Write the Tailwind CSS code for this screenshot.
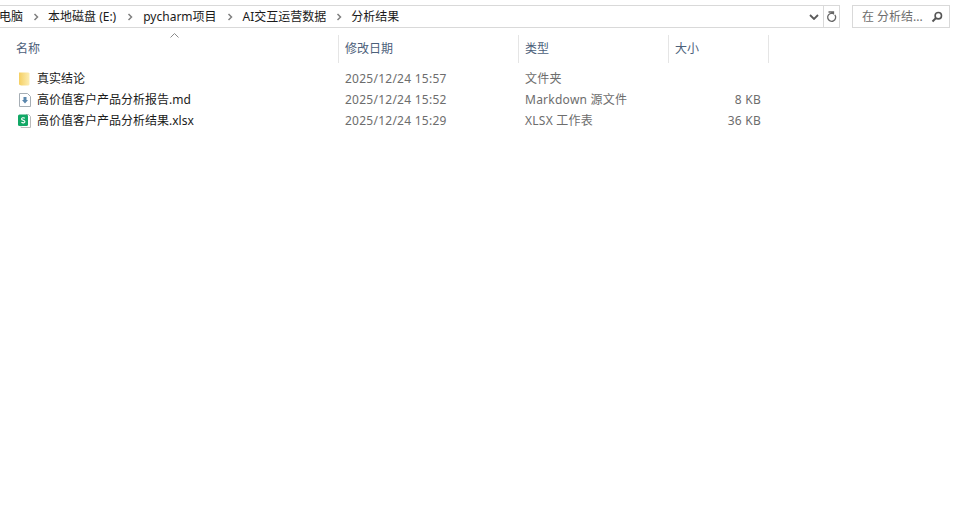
<!DOCTYPE html>
<html lang="zh-CN">
<head>
    <meta charset="UTF-8">
    <title>分析结果</title>
    <script src="https://cdn.jsdelivr.net/npm/@tailwindcss/browser@4"></script>
</head>
<body class="bg-white w-[961px] h-[510px] overflow-hidden font-['Noto_Sans','Noto_Sans_CJK_SC',sans-serif] text-[12px] leading-[16px] text-[#1a1a1a]">
    <!-- address bar -->
    <div class="flex items-start h-[28px] pt-[5px]">
        <div class="flex items-center w-[824px] h-[23px] border-y border-r border-[#d9d9d9] overflow-hidden">
            <span class="ml-[-1px]">电脑</span>
            <svg class="w-[6px] h-[8px] ml-[10px] mr-[9px]" viewBox="0 0 6 8"><path d="M1.5 1l3 3-3 3" fill="none" stroke="#808080" stroke-width="1.5"/></svg>
            <span>本地磁盘 (E:)</span>
            <svg class="w-[6px] h-[8px] ml-[11px] mr-[10px]" viewBox="0 0 6 8"><path d="M1.5 1l3 3-3 3" fill="none" stroke="#808080" stroke-width="1.5"/></svg>
            <span>pycharm项目</span>
            <svg class="w-[6px] h-[8px] ml-[10px] mr-[10px]" viewBox="0 0 6 8"><path d="M1.5 1l3 3-3 3" fill="none" stroke="#808080" stroke-width="1.5"/></svg>
            <span>AI交互运营数据</span>
            <svg class="w-[6px] h-[8px] ml-[10px] mr-[9px]" viewBox="0 0 6 8"><path d="M1.5 1l3 3-3 3" fill="none" stroke="#808080" stroke-width="1.5"/></svg>
            <span>分析结果</span>
            <svg class="w-[10px] h-[6px] ml-auto mr-[4px]" viewBox="0 0 10 6"><path d="M1 1l4 4 4-4" fill="none" stroke="#5a5a5a" stroke-width="1.8"/></svg>
        </div>
        <div class="flex items-center justify-center w-[16px] h-[23px] border-y border-r border-[#d9d9d9]">
            <svg class="w-[11px] h-[12px]" viewBox="0 0 11 12"><path d="M8.8 3.8a4 4 0 1 1-3.2-1.5H7.5M2.5 1h5v2.5" fill="none" stroke="#666" stroke-width="1.3"/></svg>
        </div>
        <div class="flex items-center w-[98px] h-[23px] ml-[12px] border border-[#d9d9d9] text-[#6d6d6d] pl-[9px]">
            <span>在 分析结...</span>
            <svg class="w-[12px] h-[12px] ml-auto mr-[6px]" viewBox="0 0 12 12"><circle cx="7.3" cy="4.7" r="3.2" fill="none" stroke="#555" stroke-width="1.6"/><path d="M5 7L1.5 10.5" stroke="#555" stroke-width="2"/></svg>
        </div>
    </div>

    <!-- column headers -->
    <div class="relative flex h-[28px] mt-[7px] text-[#4c607a]">
        <svg class="absolute left-[170px] top-[-2px] w-[9px] h-[5px]" viewBox="0 0 9 5"><path d="M0.5 4.5l4-4 4 4" fill="none" stroke="#8a8a8a"/></svg>
        <div class="w-[339px] pl-[16px] flex items-center border-r border-[#e5e5e5]">名称</div>
        <div class="w-[180px] pl-[6px] flex items-center border-r border-[#e5e5e5]">修改日期</div>
        <div class="w-[150px] pl-[6px] flex items-center border-r border-[#e5e5e5]">类型</div>
        <div class="w-[100px] pl-[6px] flex items-center border-r border-[#e5e5e5]">大小</div>
    </div>

    <!-- file rows -->
    <div class="mt-[5px] flex flex-col">
        <div class="flex items-center h-[21px]">
            <div class="w-[339px] flex items-center pl-[18px]">
                <svg class="w-[12px] h-[14px] mr-[7px]" viewBox="0 0 12 14"><defs><linearGradient id="folderFill" x1="0" x2="1" y1="0" y2="0"><stop offset="0" stop-color="#f5cf62"/><stop offset="1" stop-color="#fdeeb5"/></linearGradient></defs><path d="M1 0.5h9.5l1 1v11l-1 1H3l-2-1z" fill="url(#folderFill)"/></svg>
                <span>真实结论</span>
            </div>
            <div class="w-[180px] pl-[6px] text-[#6d6d6d] tracking-[0.25px]">2025/12/24 15:57</div>
            <div class="w-[150px] pl-[6px] text-[#6d6d6d] tracking-[0.25px]">文件夹</div>
        </div>
        <div class="flex items-center h-[21px]">
            <div class="w-[339px] flex items-center pl-[19px]">
                <svg class="w-[12px] h-[14px] mr-[6px]" viewBox="0 0 12 14"><path d="M0.5 0.5h8l3 3v10h-11z" fill="#fff" stroke="#a6aeb5"/><path d="M4.5 4h3v3h1.5L6 10.5 3 7h1.5z" fill="#5b87ad"/></svg>
                <span>高价值客户产品分析报告.md</span>
            </div>
            <div class="w-[180px] pl-[6px] text-[#6d6d6d] tracking-[0.25px]">2025/12/24 15:52</div>
            <div class="w-[150px] pl-[6px] text-[#6d6d6d] tracking-[0.25px]">Markdown 源文件</div>
            <div class="w-[92px] text-right text-[#6d6d6d] tracking-[0.25px]">8 KB</div>
        </div>
        <div class="flex items-center h-[21px]">
            <div class="w-[339px] flex items-center pl-[18px]">
                <svg class="w-[13px] h-[14px] mr-[6px]" viewBox="0 0 13 14"><path d="M8 0.5h2.5l2 2v11H3v-1" fill="#fff" stroke="#bbb"/><rect x="0" y="0.5" width="10" height="11.5" rx="1.5" fill="#12a866"/><path d="M6.8 4.2C5.5 3.3 3.4 3.8 3.6 5.2c.2 1.4 3.2.9 3.3 2.4.1 1.4-2.2 1.7-3.5.7" fill="none" stroke="#fff" stroke-width="1.1"/></svg>
                <span>高价值客户产品分析结果.xlsx</span>
            </div>
            <div class="w-[180px] pl-[6px] text-[#6d6d6d] tracking-[0.25px]">2025/12/24 15:29</div>
            <div class="w-[150px] pl-[6px] text-[#6d6d6d] tracking-[0.25px]">XLSX 工作表</div>
            <div class="w-[92px] text-right text-[#6d6d6d] tracking-[0.25px]">36 KB</div>
        </div>
    </div>
</body>
</html>
